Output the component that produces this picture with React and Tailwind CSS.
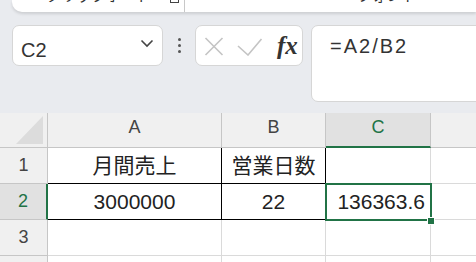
import React from "react";

const font = { fontFamily: '"Liberation Sans", "Noto Sans CJK JP", sans-serif' };

const cols = [
  { key: "A", w: "w-[174px]" },
  { key: "B", w: "w-[104px]" },
  { key: "C", w: "w-[105px]" },
];

const Chevron = () => (
  <svg width="14" height="9" viewBox="0 0 14 9" className="mt-[-4px]">
    <path d="M1.5 1.5 L7 7 L12.5 1.5" fill="none" stroke="#444" strokeWidth="1.6" />
  </svg>
);

const FormulaRow = () => (
  <div className="flex items-start pl-[12px] mt-[13px] shrink-0">
    {/* Name box */}
    <div className="w-[151px] h-[41px] bg-white border border-[#d6d6d6] rounded-[7px] flex items-center justify-between pl-[8px] pr-[8px]">
      <span className="text-[20px] text-[#333] leading-none mt-[8px]">C2</span>
      <Chevron />
    </div>

    {/* dots */}
    <div className="w-[32px] h-[41px] flex flex-col items-center justify-center gap-[3px]">
      <span className="w-[3px] h-[3px] rounded-full bg-[#555]" />
      <span className="w-[3px] h-[3px] rounded-full bg-[#555]" />
      <span className="w-[3px] h-[3px] rounded-full bg-[#555]" />
    </div>

    {/* cancel / enter / fx */}
    <div className="w-[108px] h-[41px] bg-white border border-[#d6d6d6] rounded-[7px] flex items-center pl-[8px]">
      <svg width="20" height="20" viewBox="0 0 20 20">
        <path d="M1.5 2 L18.5 19 M18.5 2 L1.5 19" stroke="#c4c4c4" strokeWidth="1.6" fill="none" />
      </svg>
      <svg width="26" height="20" viewBox="0 0 26 20" className="ml-[13px]">
        <path d="M1 10 L11 19 L24.5 3" stroke="#c4c4c4" strokeWidth="1.6" fill="none" />
      </svg>
      <span
        className="ml-[14px] text-[25px] italic font-bold text-[#333] leading-none mt-[-1px]"
        style={{ fontFamily: '"Liberation Serif", serif' }}
      >
        fx
      </span>
    </div>

    {/* formula bar */}
    <div className="ml-[8px] flex-1 h-[77px] bg-white border border-[#d6d6d6] rounded-[7px] mr-[-12px] pl-[18px] pt-[10px]">
      <span className="text-[20px] text-[#333] leading-none tracking-[2px]">=A2/B2</span>
    </div>
  </div>
);

const Ribbon = () => (
  <div className="ml-[12px] h-[12px] shrink-0 bg-white rounded-bl-[10px] shadow-[0_2px_3px_rgba(0,0,0,0.12)] overflow-hidden relative text-[15px] text-[#333]">
    <span className="absolute left-[34px] top-[-12px] leading-none">クリップボード</span>
    <span className="absolute left-[158px] top-[-6px] w-[9px] h-[9px] border border-[#444]" />
    <span className="absolute left-[172px] top-0 h-[12px] w-px bg-[#c8c8c8]" />
    <span className="absolute left-[345px] top-[-12px] leading-none">フォント</span>
  </div>
);

const Grid = () => {
  const cell = "h-full border-r border-b border-[#dadada] flex items-center shrink-0";
  return (
    <div className="relative mt-[11px] shrink-0 bg-white flex flex-col text-[#222]">
      {/* header row */}
      <div className="flex h-[35px] shrink-0 bg-[#f0f0f0]">
        <div className="w-[48px] h-full shrink-0 border-r border-b border-[#c6c6c6] flex items-end justify-end pr-[4px] pb-[3px]">
          <svg width="27" height="28" viewBox="0 0 27 28">
            <path d="M27 0 L27 28 L0 28 Z" fill="#dcdcdc" />
          </svg>
        </div>
        {cols.map((c) => (
          <div
            key={c.key}
            className={
              c.key === "C"
                ? `${c.w} h-full shrink-0 bg-[#e1e1e1] border-r border-[#c6c6c6] border-b-2 border-b-[#217346] flex justify-center pt-[5px] text-[18px] leading-[18px] text-[#217346]`
                : `${c.w} h-full shrink-0 border-r border-b border-[#c6c6c6] flex justify-center pt-[5px] text-[18px] leading-[18px] text-[#444]`
            }
          >
            {c.key}
          </div>
        ))}
        <div className="flex-1 h-full border-b border-[#c6c6c6]" />
      </div>

      {/* row 1 */}
      <div className="flex h-[36px] shrink-0">
        <div className="w-[48px] h-full shrink-0 bg-[#f0f0f0] border-r border-b border-[#c6c6c6] flex items-center justify-center text-[18px] text-[#444]">
          1
        </div>
        <div className={`w-[174px] ${cell} justify-center text-[21px] border-r-black border-b-black`}>月間売上</div>
        <div className={`w-[104px] ${cell} justify-center text-[21px] border-r-black border-b-black`}>営業日数</div>
        <div className={`w-[105px] ${cell}`} />
        <div className="flex-1 h-full border-b border-[#dadada]" />
      </div>

      {/* row 2 */}
      <div className="flex h-[36px] shrink-0">
        <div className="w-[48px] h-full shrink-0 bg-[#e1e1e1] border-r-2 border-r-[#217346] border-b border-[#c6c6c6] flex items-center justify-center text-[18px] text-[#217346]">
          2
        </div>
        <div className={`w-[174px] ${cell} justify-center text-[21px] border-r-black border-b-black`}>3000000</div>
        <div className={`w-[104px] ${cell} justify-center text-[21px] border-r-black border-b-black`}>22</div>
        <div className={`w-[105px] ${cell} justify-end pr-[5px] text-[21px]`}>136363.6</div>
        <div className="flex-1 h-full border-b border-[#dadada]" />
      </div>

      {/* row 3 */}
      <div className="flex h-[36px] shrink-0">
        <div className="w-[48px] h-full shrink-0 bg-[#f0f0f0] border-r border-b border-[#c6c6c6] flex items-center justify-center text-[18px] text-[#444]">
          3
        </div>
        <div className={`w-[174px] ${cell}`} />
        <div className={`w-[104px] ${cell}`} />
        <div className={`w-[105px] ${cell}`} />
        <div className="flex-1 h-full border-b border-[#dadada]" />
      </div>

      {/* row 4 (cut) */}
      <div className="flex h-[36px] shrink-0">
        <div className="w-[48px] h-full shrink-0 bg-[#f0f0f0] border-r border-[#c6c6c6]" />
        <div className="w-[174px] h-full shrink-0 border-r border-[#dadada]" />
        <div className="w-[104px] h-full shrink-0 border-r border-[#dadada]" />
        <div className="w-[105px] h-full shrink-0 border-r border-[#dadada]" />
      </div>

      {/* selection C2 */}
      <div className="absolute left-[325px] top-[70px] w-[107px] h-[38px] border-2 border-[#217346] pointer-events-none" />
      <div className="absolute left-[427px] top-[104px] w-[6px] h-[6px] bg-[#217346] border border-white box-content" />
    </div>
  );
};

export default function App() {
  return (
    <div className="w-[476px] h-[262px] bg-[#e9ebef] overflow-hidden flex flex-col" style={font}>
      <Ribbon />
      <FormulaRow />
      <Grid />
    </div>
  );
}
